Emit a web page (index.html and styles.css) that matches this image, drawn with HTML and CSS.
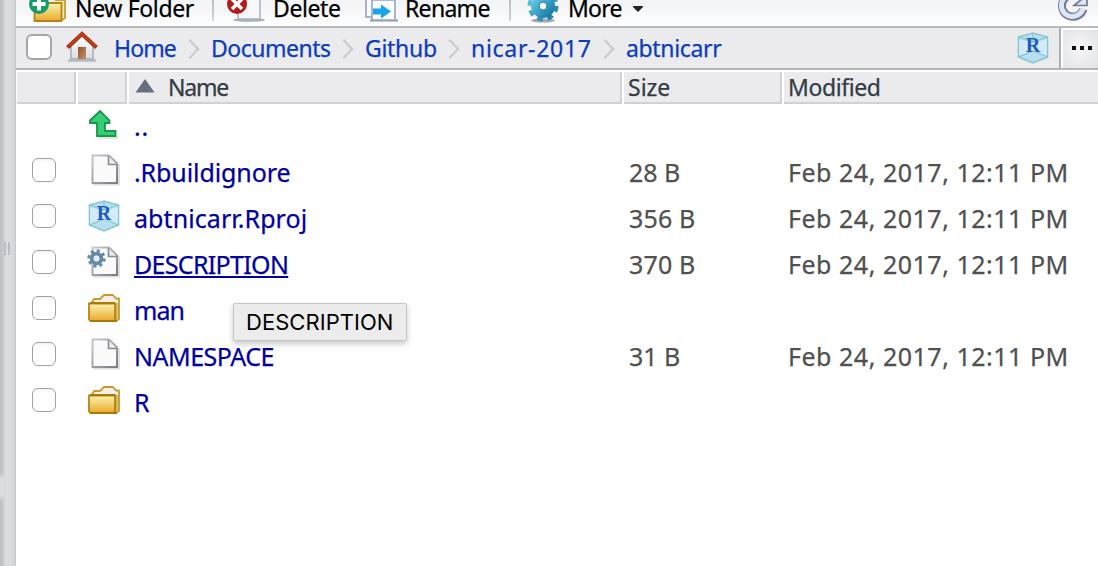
FILE: index.html
```html
<!DOCTYPE html>
<html lang="en">
<head>
<meta charset="utf-8">
<title>Files</title>
<link rel="stylesheet" href="styles.css">
</head>
<body>
<svg class="defs" width="0" height="0" aria-hidden="true">
  <defs>
    <linearGradient id="gold" x1="0" y1="0" x2="0" y2="1"><stop offset="0" stop-color="#fcf3b0"/><stop offset="1" stop-color="#eaa92c"/></linearGradient>
    <linearGradient id="edge" x1="0" y1="0" x2="1" y2="1"><stop offset="0" stop-color="#c8cacf"/><stop offset="1" stop-color="#797c82"/></linearGradient>
    <linearGradient id="gearfill" x1="0" y1="0" x2="1" y2="1"><stop offset="0" stop-color="#62c8e4"/><stop offset="1" stop-color="#187ca8"/></linearGradient>
    <linearGradient id="wood" x1="0" y1="0" x2="1" y2="1"><stop offset="0" stop-color="#8f5630"/><stop offset="1" stop-color="#c99062"/></linearGradient>
    <linearGradient id="wall" x1="0" y1="0" x2="0" y2="1"><stop offset="0" stop-color="#fff"/><stop offset="1" stop-color="#d9dde2"/></linearGradient>
    <symbol id="folder" viewBox="0 0 32 30">
      <path d="M4 9.500L6 6h6l4-4h9l3 3.500h3V26l-3 2z" fill="#f1efe6" stroke="#c59a2e" stroke-width="1.800" stroke-linejoin="round"/>
      <path d="M28.500 10v17" stroke="#d6b04e" stroke-width="2.500"/>
      <path d="M1 10.500h26V28H2.500L1 26.500z" fill="url(#gold)" stroke="#b3860e" stroke-width="1.800"/>
      <path d="M2 10h25" stroke="#a67a08" stroke-width="2"/>
      <path d="M2 28h27" stroke="#a67a08" stroke-width="2"/>
    </symbol>
    <symbol id="file" viewBox="0 0 29 32">
      <path d="M2 30.500h26V10" fill="none" stroke="#dedfe0" stroke-width="2"/>
      <path d="M1.500 1.500H18l8 8V29H1.500z" fill="#fafafb" stroke="url(#edge)" stroke-width="2"/>
      <path d="M17.500 2v8.500h8.500" fill="#e9eaed" stroke="#888b91" stroke-width="1.600"/>
    </symbol>
    <symbol id="rproj" viewBox="0 0 32 34">
      <path d="M1.500 6L16 2l14.500 4v20L16 32 1.500 26z" fill="#b9def0" stroke="#86c6d4" stroke-width="1.600"/>
      <path d="M2 8l14 4v8L2 25zM30 8l-14 4v8l14 5z" fill="#e2f3fa" opacity=".6"/>
      <path d="M1.500 6L16 11l14.500-5M16 2v9M1.500 26L16 20l14.500 6" fill="none" stroke="#83c5d1" stroke-width="1.300"/>
      <text x="16" y="20.500" text-anchor="middle" class="r-mark">R</text>
    </symbol>
    <symbol id="gear" viewBox="0 0 32 32">
      <circle cx="16" cy="16" r="12.700" fill="none" stroke="currentColor" stroke-width="5.500" stroke-dasharray="5 4.975"/>
      <circle cx="16" cy="16" r="8" fill="none" stroke="currentColor" stroke-width="7"/>
      <circle cx="16" cy="16" r="5" fill="#e8eef3"/>
    </symbol>
  </defs>
</svg>
<div class="app">
  <aside class="splitter"><span class="grip"></span></aside>
  <main class="pane">
    <div class="toolbar">
      <div class="tool new">
        <svg class="ti" width="40" height="26" viewBox="0 0 40 26"><path d="M27 0h10v18l-3 2" fill="#f6e9b4" stroke="#c8a447" stroke-width="2"/><path d="M6.500 3h27v18h-27z" fill="url(#gold)" stroke="#b48610" stroke-width="1.800"/><circle cx="11" cy="4" r="10" fill="#159c69"/><path d="M11-3V10.500M4.500 4h13" stroke="#fff" stroke-width="4"/></svg>
        <span>New Folder</span>
      </div>
      <i class="divider"></i>
      <div class="tool del">
        <svg class="ti" width="40" height="26" viewBox="0 0 40 26"><ellipse cx="23" cy="20" rx="16" ry="1.800" fill="#a9afb7"/><path d="M12-3h22v22H12z" fill="#f7f8fa" stroke="#a5b1be" stroke-width="1.500"/><circle cx="11" cy="4" r="10" fill="#b31a1a"/><path d="M6-1l10 10M16-1L6 9" stroke="#fff" stroke-width="3.600"/></svg>
        <span>Delete</span>
      </div>
      <div class="tool ren">
        <svg class="ti" width="36" height="26" viewBox="0 0 36 26"><path d="M2-2h16v19H2z" fill="#f8fafc" stroke="#95a2b0" stroke-width="1.600"/><path d="M6 20.500h28" stroke="#8c99a8" stroke-width="2"/><path d="M8 0h23v20H8z" fill="#fafcfd" stroke="#97a7b7" stroke-width="1.600"/><path d="M9 8.500h8v-4l10 7-10 7v-4H9z" fill="#17a6ec"/></svg>
        <span>Rename</span>
      </div>
      <i class="divider"></i>
      <div class="tool more">
        <svg class="ti" width="33" height="26" viewBox="0 0 33 26"><ellipse cx="17" cy="20.500" rx="12" ry="2" fill="#a3abb0"/><circle cx="17" cy="6" r="13" fill="none" stroke="url(#gearfill)" stroke-width="5" stroke-dasharray="5.600 4.610"/><circle cx="17" cy="6" r="8" fill="none" stroke="url(#gearfill)" stroke-width="8"/><circle cx="17" cy="6" r="4" fill="#f5f6f8" stroke="#1e7d9d"/></svg>
        <span>More</span>
        <svg class="caret" width="12" height="8" viewBox="0 0 12 8"><path d="M1 1h10v1L6 7 1 2z" fill="#222"/></svg>
      </div>
      <svg class="refresh" width="40" height="26" viewBox="0 0 40 26"><path d="M25.500 9A11 11 0 1 1 20-4" fill="none" stroke="#737c90" stroke-width="8"/><path d="M25 8.500A11 11 0 1 1 20-4" fill="none" stroke="#dce6f6" stroke-width="5"/><path d="M16 5.500L29-5V5.500z" fill="#dce6f6" stroke="#737c90" stroke-width="1.700"/></svg>
    </div>
    <nav class="path">
      <span class="check big"></span>
      <svg class="home" width="32" height="32" viewBox="0 0 32 32"><path d="M2 29.500h28" stroke="#b6b9be" stroke-width="2.500"/><path d="M5 14L16 4l11 10v14H5z" fill="url(#wall)" stroke="#a4adb7" stroke-width="1.500"/><path d="M12 16h8v12h-8z" fill="url(#wood)"/><path d="M1.500 16.500L16 3 30.500 16.500" fill="none" stroke="#8c3418" stroke-width="4"/><path d="M2 15.500L16 3 30 15.500" fill="none" stroke="#c73a17" stroke-width="2.600"/></svg>
      <a class="c1">Home</a><i class="sep"></i>
      <a class="c2">Documents</a><i class="sep"></i>
      <a class="c3">Github</a><i class="sep"></i>
      <a class="c4">nicar-2017</a><i class="sep"></i>
      <a class="c5">abtnicarr</a>
      <svg class="path-project" width="32" height="34"><use href="#rproj"/></svg>
      <span class="dots"><i></i><i></i><i></i></span>
    </nav>
    <div class="head">
      <div class="cell"></div><div class="cell"></div>
      <div class="cell name"><svg width="20" height="14" viewBox="0 0 20 14"><path d="M10 0l9.500 13.500H.5z" fill="#65707f"/></svg><span>Name</span></div>
      <div class="cell size"><span>Size</span></div>
      <div class="cell mod"><span>Modified</span></div>
    </div>
    <div class="rows">
      <div class="row"><span></span><svg class="up" width="30" height="30" viewBox="0 0 30 30"><path d="M9 28h20" stroke="#e3e5e4" stroke-width="2"/><path d="M11 1L20.500 10.500V13H16v8h10.500v5H8V13H1v-2.500z" fill="#37cd75" stroke="#16964c" stroke-width="1.800"/></svg><a class="n0">..</a></div>
      <div class="row"><span class="check"></span><svg class="file" width="29" height="32"><use href="#file"/></svg><a class="n1">.Rbuildignore</a><span class="bytes b2">28 B</span><span class="date">Feb 24, 2017, 12:11 PM</span></div>
      <div class="row"><span class="check"></span><svg class="rp" width="32" height="34"><use href="#rproj"/></svg><a class="n2">abtnicarr.Rproj</a><span class="bytes">356 B</span><span class="date">Feb 24, 2017, 12:11 PM</span></div>
      <div class="row"><span class="check"></span><svg class="cfg" width="33" height="32" viewBox="0 0 33 32"><use href="#file" x="4" width="29" height="32"/><use href="#gear" y="3" width="19" height="19"/></svg><a class="n3">DESCRIPTION</a><span class="bytes">370 B</span><span class="date">Feb 24, 2017, 12:11 PM</span></div>
      <div class="row"><span class="check"></span><svg class="fold" width="32" height="30"><use href="#folder"/></svg><a class="n4">man</a></div>
      <div class="row"><span class="check"></span><svg class="file" width="29" height="32"><use href="#file"/></svg><a class="n5">NAMESPACE</a><span class="bytes b2">31 B</span><span class="date">Feb 24, 2017, 12:11 PM</span></div>
      <div class="row"><span class="check"></span><svg class="fold" width="32" height="30"><use href="#folder"/></svg><a class="n6">R</a></div>
    </div>
  </main>
  <div class="tooltip"><span>DESCRIPTION</span></div>
</div>
</body>
</html>
```

FILE: styles.css
```css
* { box-sizing: border-box; }
body { margin: 0; overflow: hidden; font-family: "Noto Sans", sans-serif; background: #fff; -webkit-text-stroke: .25px currentColor; }
.defs { position: absolute; }
.r-mark { font: bold 20px "Liberation Serif", serif; fill: #215cbd; -webkit-text-stroke: 0; }
.app { display: flex; width: 1098px; height: 566px; position: relative; overflow: hidden; }
.splitter { width: 16px; flex: none; background: linear-gradient(90deg, #bfc0c4 0, #c5c6ca 3px, #d1d2d6 4px, #dcdde1 5px, #dcdde1 10px, #d3d4d9 14px, #c4c8cd 16px); display: flex; align-items: flex-start; }
.splitter::before { content: ""; width: 4px; height: 30px; margin-top: 472px; background: linear-gradient(#dcdde100, #dcdde1 25%, #dcdde1 75%, #dcdde100); }
.grip { width: 6px; height: 13px; margin-top: 242px; border: solid #b9bdc3; border-width: 0 2px; }
.pane { flex: 1; min-width: 0; }
.toolbar { height: 28px; display: flex; align-items: flex-start; background: linear-gradient(#f2f3f6, #fdfdfd); border-bottom: 2px solid #b5babd; }
.tool { display: flex; align-items: flex-start; height: 26px; color: #000; font-size: 23px; white-space: nowrap; flex: none; }
.tool span { line-height: 26px; margin-top: -5px; }
.ti { flex: none; display: block; }
.new { width: 195px; padding-left: 12px; }
.new span { margin-left: 7px; letter-spacing: -.35px; }
.divider { width: 2px; height: 21px; background: linear-gradient(#b9bdc1, #d4d6d8); flex: none; }
.new + .divider { margin-left: 1px; margin-right: -1px; }
.del { width: 149px; padding-left: 13px; }
.del span { margin-left: 7px; letter-spacing: -.4px; }
.ren { width: 147px; padding-left: 2px; }
.ren span { margin-left: 5px; letter-spacing: -.7px; }
.more { padding-left: 15px; }
.more span { margin-left: 9px; letter-spacing: -.8px; width: 54px; }
.caret { margin: 5px 0 0 10px; }
.refresh { margin-left: auto; flex: none; }
.path { height: 42px; display: flex; align-items: center; background: #ebebed; border-bottom: 2px solid #b4b5b7; padding-left: 10px; font-size: 23px; line-height: 40px; color: #0b3cbb; white-space: nowrap; }
.path a { flex: none; height: 40px; }
.check { width: 24px; height: 24px; border: 1.5px solid #a0a0a0; border-radius: 6px; background: linear-gradient(#f4f4f4, #fff 4px); flex: none; }
.check.big { width: 26px; height: 26px; border: 2px solid #a6a6a6; background: #fff; margin-bottom: 2px; }
.home { margin-left: 14px; margin-bottom: 2px; flex: none; }
.c1 { margin-left: 16px; width: 62px; letter-spacing: -.9px; }
.c2 { width: 119px; letter-spacing: -.5px; }
.c3 { width: 71px; letter-spacing: -.3px; }
.c4 { width: 120px; letter-spacing: .7px; }
.c5 { width: 95px; letter-spacing: -.35px; }
.sep { width: 35px; height: 18px; display: flex; align-items: center; justify-content: center; flex: none; margin-top: 2px; }
.sep::before { content: ""; width: 12px; height: 12px; margin-left: -8px; border: solid #c6c8cd; border-width: 2px 2px 0 0; transform: scaleX(.95) rotate(45deg); }
.path-project { margin: 0 10px 0 auto; flex: none; }
.dots { width: 39px; height: 40px; display: flex; align-items: center; justify-content: center; gap: 4px; padding-left: 5px; border-left: 2px solid #a9b0b5; box-shadow: inset 2px 2px #fff; background: radial-gradient(#f7f7f9, #e1e2e5); flex: none; }
.dots i { width: 4px; height: 4px; background: #111; }
.head { height: 34px; display: flex; background: #fff; color: #333c43; font-size: 23px; line-height: 31px; padding: 2px 0 0 1px; gap: 2px; white-space: nowrap; }
.cell { height: 32px; width: 59px; background: #ebebed; border: solid #cdd2d4; border-width: 0 2px 2px 0; flex: none; display: flex; }
.cell:nth-child(2) { width: 49px; }
.cell.name { width: 493px; padding-left: 6px; }
.cell.name svg { margin-top: 7px; }
.cell.name span { margin-left: 13px; letter-spacing: -1.2px; }
.cell.size { width: 158px; padding-left: 4px; }
.cell.mod { width: 320px; padding-left: 4px; letter-spacing: -.4px; }
.row { height: 46px; display: grid; grid-template-columns: 59px 43px 495px 159px 1fr; padding-left: 16px; align-items: center; font-size: 25px; line-height: 46px; white-space: nowrap; }
.row > .check { margin-bottom: 6px; }
.row a, .bytes, .date { margin-top: -2px; }
.row a { color: #0000a0; justify-self: start; }
.row svg { margin-bottom: 6px; }
.row .up { margin-left: -2px; margin-bottom: 5px; }
.row .fold, .row .rp { margin-left: -3px; }
.row .cfg { margin-left: -4px; color: #6689a5; }
.bytes, .date { color: #505050; }
.bytes { letter-spacing: .15px; }
.b2 { letter-spacing: 0; }
.date { letter-spacing: .52px; }
.n0 { letter-spacing: .8px; }
.n1 { letter-spacing: -.1px; }
.n2 { letter-spacing: .08px; }
.n3 { letter-spacing: -.68px; text-decoration: underline; text-decoration-thickness: 2px; text-underline-offset: 2px; }
.n4 { letter-spacing: -1px; }
.n5 { letter-spacing: -.5px; }
.tooltip { position: absolute; left: 233px; top: 303px; width: 174px; height: 38px; background: #ececec; border: 1px solid #c5c5c5; border-radius: 2px; box-shadow: 0 3px 6px rgba(0,0,0,.22); font: 22px/36px Inter, sans-serif; color: #000; padding-left: 12px; letter-spacing: .05px; -webkit-text-stroke: 0; }
```
